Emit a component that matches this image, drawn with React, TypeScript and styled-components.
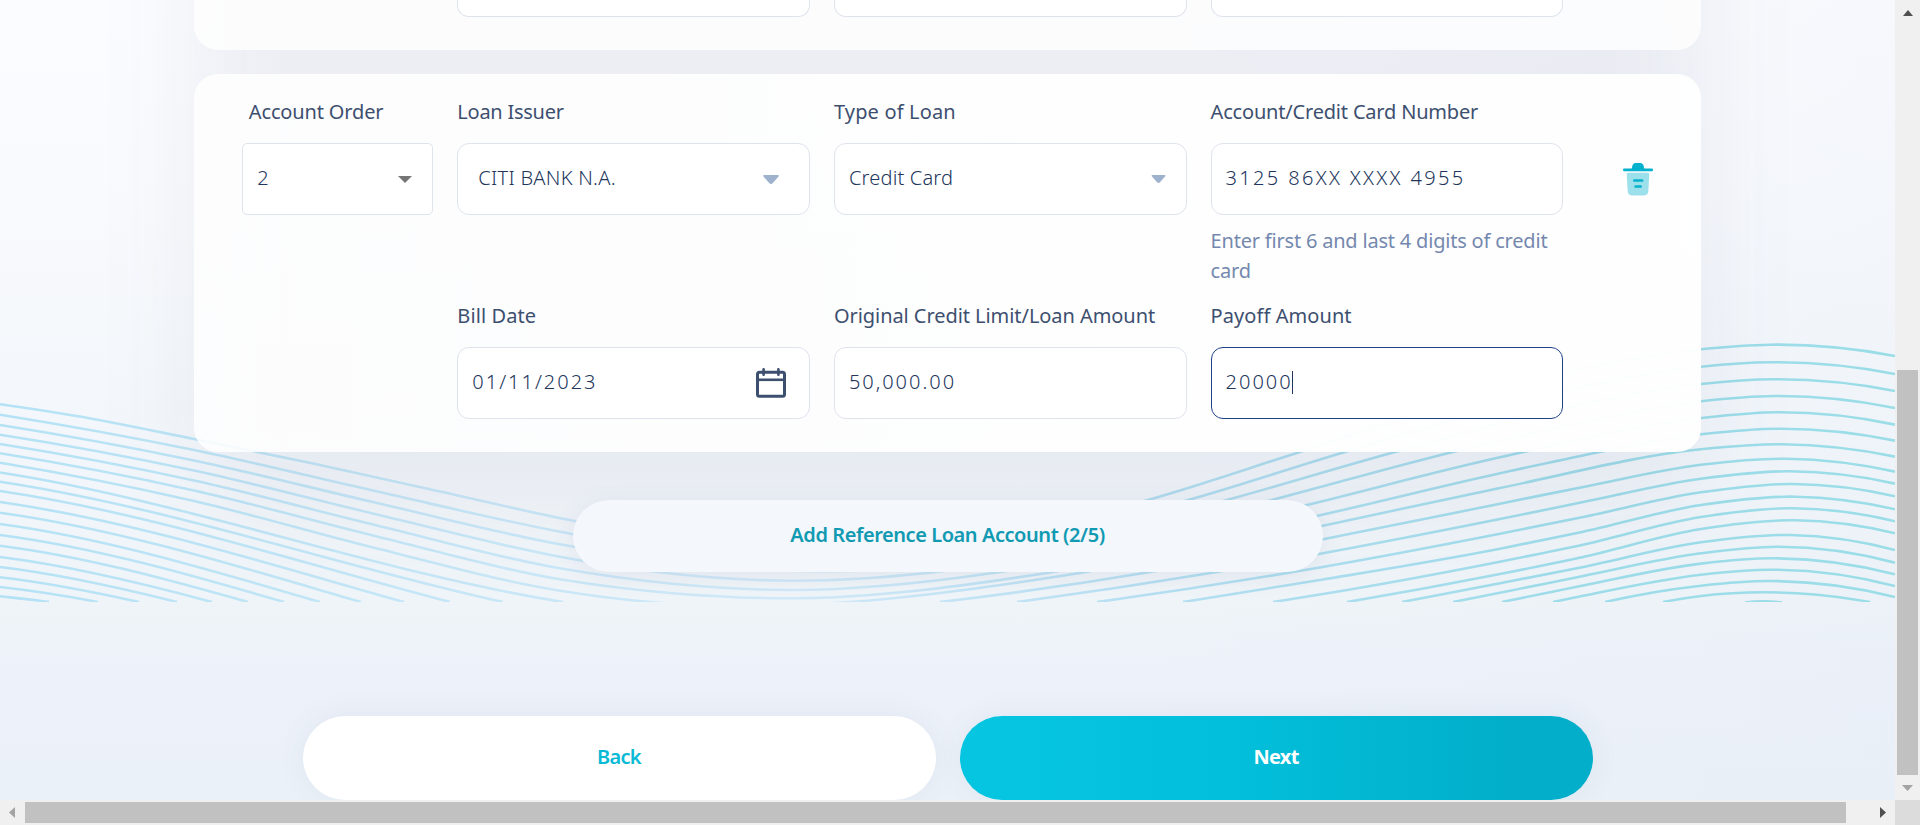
import React from "react";
import styled, { createGlobalStyle } from "styled-components";

const GlobalStyle = createGlobalStyle`
  *, *::before, *::after { box-sizing: border-box; }
  html, body { margin: 0; overflow: hidden; }
  body { font-family: "Noto Sans", "Open Sans", sans-serif; font-size: 20px; color: #3d4f6f; }
`;

const Window = styled.div`
  display: grid;
  grid-template-columns: 1895px 25px;
  grid-template-rows: 800px 25px;
  width: 1920px;
  height: 825px;
`;

const Page = styled.main`
  position: relative;
  isolation: isolate;
  overflow: hidden;
  display: flex;
  flex-direction: column;
  align-items: center;
  background:
    linear-gradient(90deg, transparent 60%, rgba(222, 230, 242, 0.18) 100%),
    linear-gradient(180deg, #fbfcff 0, #f8fafd 200px, #f3f7fb 420px, #eff4f8 600px, #edf1fa 690px, #ebf1f8 800px);
`;

const Waves = styled.svg`
  position: absolute;
  inset: 0 0 auto 0;
  width: 1895px;
  height: 602px;
  z-index: -2;
`;

const Cards = styled.section`
  position: relative;
  display: flex;
  flex-direction: column;
  gap: 24px;
  width: 1507px;

  &::before {
    content: "";
    position: absolute;
    z-index: -1;
    inset: -120px 0 -50px;
    border-radius: 60px;
    background: rgba(60, 65, 100, 0.068);
    filter: blur(48px);
  }
`;

const Card = styled.article<{ $cut?: boolean }>`
  display: grid;
  grid-template-columns: 191px repeat(3, 352.67px) 1fr;
  column-gap: 24px;
  row-gap: 15px;
  padding: ${(p) => (p.$cut ? "0 12px 33px 48.3px" : "22px 12px 33px 48.3px")};
  border-radius: ${(p) => (p.$cut ? "0 0 24px 24px" : "24px")};
  background: ${(p) =>
    p.$cut
      ? "rgba(254, 254, 254, 0.85)"
      : "linear-gradient(90deg, rgba(255, 255, 255, 0.86), rgba(255, 255, 255, 0.94) 55%, rgba(255, 255, 255, 0.97))"};
`;

const Cell = styled.div<{ $col: number }>`
  grid-column: ${(p) => p.$col};
  display: flex;
  flex-direction: column;
`;

const Label = styled.label<{ $indent?: number; $track?: number }>`
  font-weight: 400;
  line-height: 30px;
  margin-top: 1px;
  margin-bottom: 16px;
  padding-left: ${(p) => p.$indent ?? 0}px;
  letter-spacing: ${(p) => p.$track ?? 0}px;
  white-space: nowrap;
`;

const Field = styled.div<{ $radius?: number; $focus?: boolean; $left?: number; $right?: number }>`
  display: flex;
  align-items: center;
  justify-content: space-between;
  height: 72px;
  padding: 0 ${(p) => p.$right ?? 14}px 0 ${(p) => p.$left ?? 14}px;
  border: 1px solid ${(p) => (p.$focus ? "#1f4289" : "#dfe3ed")};
  border-radius: ${(p) => p.$radius ?? 12}px;
  background: #fff;
`;

const CutField = styled.div`
  height: 17px;
  border: 1px solid #dfe3ed;
  border-top: 0;
  border-radius: 0 0 12px 12px;
  background: #fff;
`;

const Value = styled.span<{ $track?: number }>`
  display: flex;
  align-items: center;
  padding-bottom: 3px;
  line-height: 30px;
  font-weight: 300;
  color: #22365c;
  letter-spacing: ${(p) => p.$track ?? 0}px;
  white-space: nowrap;
`;

const Caret = styled.i`
  width: 1px;
  height: 23px;
  background: #24365c;
  margin: 2px 0 0 -1px;
`;

const Hint = styled.p`
  margin: 11px 0 -1px;
  line-height: 30px;
  letter-spacing: -0.2px;
  color: #7488ae;
`;

const Delete = styled.button`
  grid-column: 5;
  align-self: start;
  display: flex;
  justify-content: center;
  margin: 67px 0 0;
  padding: 0;
  border: 0;
  background: none;
`;

const AddButton = styled.button`
  width: 750px;
  height: 72px;
  margin-top: 48px;
  padding: 0 0 3px;
  border: 0;
  border-radius: 36px;
  background: #f4f7fc;
  box-shadow: 0 4px 24px rgba(60, 80, 130, 0.08);
  color: #119ab2;
  font: 600 20px "Noto Sans", sans-serif;
  letter-spacing: -0.44px;
`;

const Actions = styled.nav`
  display: flex;
  gap: 24px;
  margin-top: 144px;
`;

const Action = styled.button<{ $primary?: boolean }>`
  width: 633px;
  height: 84px;
  padding: 0 0 3px;
  border: 0;
  border-radius: 42px;
  background: ${(p) =>
    p.$primary ? "linear-gradient(90deg, #06c5e1 10%, #02c0dc 40%, #02aec9 88%)" : "#fff"};
  box-shadow: 0 0 30px rgba(60, 80, 120, 0.07);
  color: ${(p) => (p.$primary ? "#fff" : "#08bad6")};
  font: ${(p) => (p.$primary ? 700 : 600)} 20px "Noto Sans", sans-serif;
  letter-spacing: -0.7px;
`;

const VBar = styled.div`
  display: flex;
  flex-direction: column;
  align-items: center;
  justify-content: space-between;
  padding: 10px 0 9px;
  background: #f0f0f0;
`;

const VThumb = styled.div`
  width: 21px;
  height: 405px;
  margin: 344px 0 0;
  background: #c1c1c1;
`;

const HBar = styled.div`
  display: flex;
  align-items: center;
  justify-content: space-between;
  padding: 0 9px 0 9px;
  background: #f0f0f0;
`;

const HThumb = styled.div`
  width: 1821px;
  height: 21px;
  margin-right: 24px;
  background: #c1c1c1;
`;

const Corner = styled.div`
  background: #dcdcdc;
`;

type Point = [number, number];

// Each wave is given by the points it passes through.
const waves: Point[][] = [
  [[0, 404.2], [75, 415.7], [194, 439], [312, 463.3], [431, 489.5], [573, 520.7], [680, 540], [800, 550], [1000, 537], [1148, 500], [1300, 452], [1430, 411], [1563, 373], [1701, 349.3], [1770, 344.7], [1895, 356]],
  [[0, 414.7], [194, 450], [375, 491], [560, 531.7], [680, 552], [800, 561], [1000, 547], [1188, 500], [1345, 452], [1563, 391], [1701, 366.7], [1770, 362.3], [1895, 374]],
  [[0, 425], [194, 460.5], [375, 502.5], [560, 544.3], [680, 563], [800, 571], [1000, 559], [1227, 500], [1395, 452], [1563, 408.5], [1701, 384], [1773, 379.3], [1895, 391]],
  [[0, 434.7], [194, 470.5], [375, 514], [560, 556.7], [657, 572], [790, 580.7], [927, 573], [1100, 544], [1272, 500], [1453, 452], [1580, 423], [1701, 401.3], [1775, 396], [1895, 408]],
  [[0, 444], [194, 480.5], [375, 525], [560, 568.3], [670, 583.5], [790, 590], [993, 573], [1150, 543], [1307, 505], [1500, 457.3], [1701, 418], [1778, 412.3], [1895, 424.7]],
  [[0, 453.3], [194, 490.5], [375, 536], [560, 579.3], [670, 593], [790, 598.3], [1047, 573], [1318, 515.7], [1500, 473.3], [1582, 455.7], [1701, 434.3], [1780, 428.7], [1895, 440.7]],
  [[0, 462.7], [194, 501], [375, 548], [560, 590.7], [650, 602], [750, 607], [850, 602], [1086, 572], [1323, 525.7], [1500, 488], [1701, 449.3], [1782, 444.3], [1895, 456.7]],
  [[940, 602], [1153, 571.5], [1323, 539.3], [1500, 503.7], [1582, 487.2], [1701, 464.7], [1786, 458.7], [1895, 471.7]],
  [[1017, 602], [1217, 572], [1500, 519], [1582, 502.3], [1701, 478.7], [1790, 471.3], [1895, 483.7]],
  [[1097, 602], [1305, 570], [1500, 533.7], [1582, 517.3], [1701, 492.3], [1792, 484], [1895, 496.3]],
  [[1183, 602], [1323, 579.5], [1500, 548.7], [1582, 532], [1701, 505], [1795, 496.7], [1895, 509.3]],
  [[1273, 602], [1323, 594], [1500, 561.7], [1582, 545], [1701, 517], [1793, 508.3], [1895, 521.3]],
  [[1347, 602], [1500, 574], [1582, 557.2], [1701, 529], [1795, 520.3], [1895, 533.3]],
  [[1402, 602], [1500, 583.3], [1582, 567.2], [1701, 542.3], [1790, 535], [1895, 550]],
  [[1453, 602], [1500, 592.8], [1582, 576.2], [1701, 553.3], [1778, 546.7], [1895, 562.7]],
  [[1502, 602], [1582, 585.7], [1701, 563.6], [1775, 558.3], [1895, 574.3]],
  [[1553, 602], [1582, 596], [1701, 574.7], [1770, 569.7], [1895, 586]],
  [[1605, 602], [1701, 585.7], [1768, 581], [1895, 597]],
  [[1663, 602], [1701, 596], [1765, 592.3], [1815, 594.5], [1870, 602]],
  [[1745, 602.5], [1763, 601.3], [1782, 602.5]],
];

// Left-hand tails: starting height, where each one leaves the band, and its slope there.
const tails: [number, number, number][] = [
  [472.5, 563, 0.16], [481.7, 503, 0.22], [491, 450, 0.26], [502, 404, 0.28], [512.7, 361, 0.29],
  [524, 320, 0.29], [535, 284, 0.29], [545.7, 248, 0.28], [557, 212, 0.27], [567, 177, 0.25],
  [577.3, 139, 0.22], [587, 98, 0.19], [596.3, 49, 0.15],
];

function smooth(points: Point[]) {
  const n = points.length;
  const step = points.slice(1).map((p, i) => p[0] - points[i][0]);
  const rise = points.slice(1).map((p, i) => (p[1] - points[i][1]) / step[i]);
  const slope: number[] = new Array(n);
  for (let i = 1; i < n - 1; i++) {
    slope[i] = (rise[i - 1] * step[i] + rise[i] * step[i - 1]) / (step[i - 1] + step[i]);
  }
  slope[0] = 2 * rise[0] - slope[1];
  slope[n - 1] = 2 * rise[n - 2] - slope[n - 2];
  let d = `M${points[0][0]} ${points[0][1]}`;
  for (let i = 0; i < n - 1; i++) {
    const [x0, y0] = points[i];
    const [x1, y1] = points[i + 1];
    const h = step[i] / 3;
    d += `C${x0 + h} ${y0 + slope[i] * h} ${x1 - h} ${y1 - slope[i + 1] * h} ${x1} ${y1}`;
  }
  return d;
}

function tail([y, x, end]: [number, number, number], i: number) {
  const start = 0.155 - i * 0.004;
  const h = x / 3;
  return `M0 ${y}C${h} ${y + start * h} ${x - h} ${602 - end * h} ${x} 602`;
}

function WaveBand() {
  return (
    <Waves viewBox="0 0 1895 602">
      <defs>
        <linearGradient id="wave" gradientUnits="userSpaceOnUse" x1="0" x2="1895" y1="0" y2="0">
          <stop offset="0" stopColor="#b4e2f5" />
          <stop offset="0.2" stopColor="#c4e6f6" />
          <stop offset="0.42" stopColor="#d0e8f8" />
          <stop offset="0.6" stopColor="#b6dff2" />
          <stop offset="0.82" stopColor="#9edcea" />
          <stop offset="1" stopColor="#9adde7" />
        </linearGradient>
      </defs>
      <g fill="none" stroke="url(#wave)" strokeWidth="2.6">
        {waves.map((w, i) => <path key={i} d={smooth(w)} />)}
        {tails.map((t, i) => <path key={`t${i}`} d={tail(t, i)} />)}
      </g>
    </Waves>
  );
}

const Arrow = ({ w = 16, h = 9 }: { w?: number; h?: number }) => (
  <svg width={w} height={h} viewBox="0 0 16 9">
    <path d="M1.200 0h13.600q1.600.4.6 1.800L9.600 8.200q-1.600 1.400-3.200 0L.6 1.800Q-.4.4 1.200 0z" fill="#9fb2cd" />
  </svg>
);

const SharpArrow = () => (
  <svg width="14" height="7" viewBox="0 0 14 7">
    <path d="M0 0h14L7 7z" fill="#757575" />
  </svg>
);

const Calendar = () => (
  <svg width="30" height="30" viewBox="0 0 30 30" fill="none" stroke="#3d4f6f" strokeWidth="3">
    <rect x="1.500" y="4.200" width="27" height="24" rx="2" />
    <path d="M1.500 11.800h27" strokeWidth="2.600" />
    <path d="M7.600 1.300v5.500M22.400 1.300v5.500" strokeLinecap="round" strokeWidth="2.600" />
  </svg>
);

const Trash = () => (
  <svg width="30" height="33" viewBox="0 0 30 33">
    <path d="M8.700 6l.5-2.500Q9.900 0 12.500 0h5q2.600 0 3.300 3.500l.5 2.500z" fill="#05b1cc" />
    <rect x="0" y="5.500" width="30" height="2.700" rx="1.200" fill="#05b1cc" />
    <path d="M5 9.700h20q1.400 0 1.300 1.500L25.300 28q-.3 4.400-4 4.400H8.700q-3.700 0-4-4.400L3.700 11.200Q3.600 9.700 5 9.700z" fill="#9be0eb" />
    <path d="M11.200 17.500h8M12.500 23.500h5.300" stroke="#05b1cc" strokeWidth="2.400" strokeLinecap="round" />
  </svg>
);

const UpArrow = () => (
  <svg width="10" height="6"><path d="M0 6h10L5 0z" fill="#505050" /></svg>
);
const DownArrow = () => (
  <svg width="11" height="6"><path d="M0 0h11L5.500 6z" fill="#a3a3a3" /></svg>
);
const LeftArrow = () => (
  <svg width="6" height="11"><path d="M6 0v11L0 5.500z" fill="#a3a3a3" /></svg>
);
const RightArrow = () => (
  <svg width="6" height="11"><path d="M0 0v11L6 5.500z" fill="#505050" /></svg>
);

export default function App() {
  return (
    <>
      <GlobalStyle />
      <Window>
        <Page>
          <WaveBand />
          <Cards>
            <Card $cut>
              <Cell $col={2}><CutField /></Cell>
              <Cell $col={3}><CutField /></Cell>
              <Cell $col={4}><CutField /></Cell>
            </Card>
            <Card>
              <Cell $col={1}>
                <Label $indent={6.5} $track={-0.15}>Account Order</Label>
                <Field $radius={5} $right={20}>
                  <Value>2</Value>
                  <SharpArrow />
                </Field>
              </Cell>
              <Cell $col={2}>
                <Label $indent={-1} $track={-0.25}>Loan Issuer</Label>
                <Field $left={20} $right={30}>
                  <Value $track={0.28}>CITI BANK N.A.</Value>
                  <Arrow />
                </Field>
              </Cell>
              <Cell $col={3}>
                <Label $track={0.15}>Type of Loan</Label>
                <Field $right={20}>
                  <Value $track={0.18}>Credit Card</Value>
                  <Arrow w={15} h={8} />
                </Field>
              </Cell>
              <Cell $col={4}>
                <Label $track={-0.19}>Account/Credit Card Number</Label>
                <Field>
                  <Value $track={2.33}>3125 86XX XXXX 4955</Value>
                </Field>
                <Hint>Enter first 6 and last 4 digits of credit card</Hint>
              </Cell>
              <Delete aria-label="Delete">
                <Trash />
              </Delete>
              <Cell $col={2}>
                <Label $track={0.1}>Bill Date</Label>
                <Field $right={22.5}>
                  <Value $track={2}>01/11/2023</Value>
                  <Calendar />
                </Field>
              </Cell>
              <Cell $col={3}>
                <Label $track={-0.06}>Original Credit Limit/Loan Amount</Label>
                <Field>
                  <Value $track={1.97}>50,000.00</Value>
                </Field>
              </Cell>
              <Cell $col={4}>
                <Label $track={0.07}>Payoff Amount</Label>
                <Field $focus>
                  <Value $track={1.97}>20000<Caret /></Value>
                </Field>
              </Cell>
            </Card>
          </Cards>
          <AddButton>Add Reference Loan Account (2/5)</AddButton>
          <Actions>
            <Action>Back</Action>
            <Action $primary>Next</Action>
          </Actions>
        </Page>
        <VBar>
          <UpArrow />
          <VThumb />
          <DownArrow />
        </VBar>
        <HBar>
          <LeftArrow />
          <HThumb />
          <RightArrow />
        </HBar>
        <Corner />
      </Window>
    </>
  );
}
